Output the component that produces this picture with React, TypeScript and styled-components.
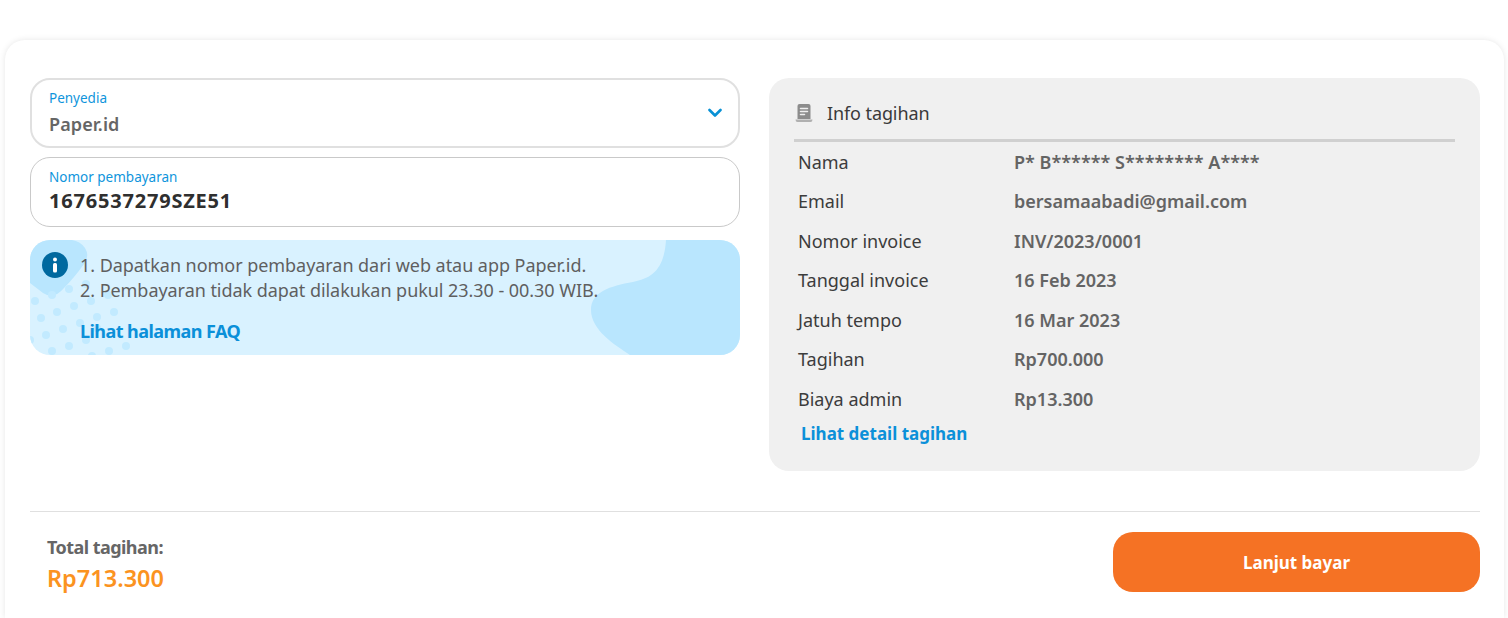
import React from 'react';
import styled, { createGlobalStyle } from 'styled-components';

const GlobalStyle = createGlobalStyle`
  html, body {
    margin: 0;
    background: #fff;
    font-family: "Noto Sans", "Liberation Sans", sans-serif;
    overflow: hidden;
  }
`;

const billRows = [
  ['Nama', 'P* B****** S******** A****'],
  ['Email', 'bersamaabadi@gmail.com'],
  ['Nomor invoice', 'INV/2023/0001'],
  ['Tanggal invoice', '16 Feb 2023'],
  ['Jatuh tempo', '16 Mar 2023'],
  ['Tagihan', 'Rp700.000'],
  ['Biaya admin', 'Rp13.300'],
];

const dots = [
  [5, 61], [22, 55], [39, 49], [56, 44], [78, 55], [61, 61], [44, 66], [27, 72], [11, 78], [67, 77], [84, 72],
  [33, 89], [50, 83], [16, 95], [67, 88], [56, 100], [39, 106], [22, 111], [96, 106], [79, 111], [0, 100], [62, 116],
];

const InfoBackground = () => (
  <BackgroundSvg viewBox="0 0 710 115" preserveAspectRatio="none">
    <path d="M0 0H42Q50 1 55 8Q60 16 54 24Q44 38 34 48Q24 60 13 53L0 43Z" fill="#b9e6fe" />
    <path d="M636 0H710V115H600C585 105 561 90 561 70C561 52 580 46 603 42C622 38 634 30 636 0Z" fill="#b9e6fe" />
    {dots.map(([cx, cy]) => (
      <circle key={`${cx}-${cy}`} cx={cx} cy={cy} r="4" fill="#c2eaff" />
    ))}
  </BackgroundSvg>
);

const InfoIcon = () => (
  <svg width="26" height="26" viewBox="0 0 26 26">
    <circle cx="13" cy="13" r="13" fill="#00699f" />
    <circle cx="13" cy="7.500" r="2" fill="#fff" />
    <rect x="11" y="11" width="4" height="9.500" rx="1.500" fill="#fff" />
  </svg>
);

const BillIcon = () => (
  <svg width="18" height="20" viewBox="0 0 18 20">
    <path d="M2.500 3Q2.500 1 4.500 1H13.500Q15.500 1 15.500 3V16H2.500Z" fill="#8c8c8c" />
    <path d="M.5 16.500H17.500Q17.500 19 15.500 19H2.500Q.5 19 .5 16.500Z" fill="#b0b0b0" />
    <path d="M5.500 5.500H12.500M5.500 8.500H12.500M5.500 11.500H9.500" stroke="#efefef" strokeWidth="1.500" strokeLinecap="round" />
  </svg>
);

const ChevronIcon = () => (
  <svg width="14" height="10" viewBox="0 0 14 10">
    <path d="M1.500 2L7 7.500L12.500 2" fill="none" stroke="#0891d5" strokeWidth="2.600" strokeLinecap="round" strokeLinejoin="round" />
  </svg>
);

export default function App() {
  return (
    <Page>
      <GlobalStyle />
      <Card>
        <Columns>
          <LeftColumn>
            <SelectField>
              <FieldText>
                <FieldLabel>Penyedia</FieldLabel>
                <SelectValue>Paper.id</SelectValue>
              </FieldText>
              <ChevronIcon />
            </SelectField>
            <InputField>
              <FieldLabel>Nomor pembayaran</FieldLabel>
              <InputValue>1676537279SZE51</InputValue>
            </InputField>
            <InfoBox>
              <InfoBackground />
              <IconSlot>
                <InfoIcon />
              </IconSlot>
              <InfoContent>
                <InfoLine>1. Dapatkan nomor pembayaran dari web atau app Paper.id.</InfoLine>
                <InfoLine>2. Pembayaran tidak dapat dilakukan pukul 23.30 - 00.30 WIB.</InfoLine>
                <FaqLink>Lihat halaman FAQ</FaqLink>
              </InfoContent>
            </InfoBox>
          </LeftColumn>
          <BillPanel>
            <BillHeader>
              <BillIcon />
              <BillTitle>Info tagihan</BillTitle>
            </BillHeader>
            <BillList>
              {billRows.map(([label, value]) => (
                <BillRow key={label}>
                  <BillLabel>{label}</BillLabel>
                  <BillValue>{value}</BillValue>
                </BillRow>
              ))}
            </BillList>
            <DetailLink>Lihat detail tagihan</DetailLink>
          </BillPanel>
        </Columns>
        <Footer>
          <TotalBlock>
            <TotalLabel>Total tagihan:</TotalLabel>
            <TotalValue>Rp713.300</TotalValue>
          </TotalBlock>
          <PayButton>Lanjut bayar</PayButton>
        </Footer>
      </Card>
    </Page>
  );
}

const Page = styled.div`
  padding: 40px 4px 0 5px;
  height: 618px;
  box-sizing: border-box;
`;

const Card = styled.div`
  height: 578px;
  box-sizing: border-box;
  padding: 38px 24px 0 25px;
  background: #fff;
  border-radius: 20px 20px 0 0;
  box-shadow: 0 0 6px rgba(0, 0, 0, 0.1);
`;

const Columns = styled.div`
  display: grid;
  grid-template-columns: 710px 711px;
  column-gap: 29px;
  height: 433px;
`;

const LeftColumn = styled.div`
  display: flex;
  flex-direction: column;
`;

const SelectField = styled.div`
  height: 70px;
  box-sizing: border-box;
  border: 2px solid #e0e0e0;
  border-radius: 20px;
  padding: 0 16px 0 17px;
  display: flex;
  align-items: center;
  justify-content: space-between;
`;

const FieldText = styled.div`
  display: flex;
  flex-direction: column;
`;

const FieldLabel = styled.div`
  font-size: 13.500px;
  line-height: 17px;
  color: #0f95dc;
`;

const SelectValue = styled.div`
  font-size: 18px;
  line-height: 26px;
  margin-top: 4px;
  font-weight: 600;
  letter-spacing: 0.1px;
  color: #666;
`;

const InputField = styled.div`
  margin-top: 9px;
  height: 70px;
  box-sizing: border-box;
  border: 1px solid #c9c9c9;
  border-radius: 20px;
  padding: 11px 18px 0 18px;
`;

const InputValue = styled.div`
  font-size: 20px;
  line-height: 30px;
  font-weight: 700;
  color: #2f2f2f;
  letter-spacing: 0.8px;
`;

const InfoBox = styled.div`
  position: relative;
  overflow: hidden;
  margin-top: 13px;
  height: 115px;
  background: #d9f2ff;
  border-radius: 20px;
  display: flex;
  padding: 13px 0 0 12px;
  box-sizing: border-box;
`;

const BackgroundSvg = styled.svg`
  position: absolute;
  inset: 0;
  width: 100%;
  height: 100%;
`;

const IconSlot = styled.div`
  position: relative;
  width: 38px;
  flex: none;
  margin-top: -1px;
`;

const InfoContent = styled.div`
  position: relative;
  display: flex;
  flex-direction: column;
`;

const InfoLine = styled.div`
  font-size: 18px;
  line-height: 25px;
  letter-spacing: -0.05px;
  color: #5f5f5f;
`;

const FaqLink = styled.a`
  margin-top: 16px;
  font-size: 18px;
  line-height: 24px;
  font-weight: 700;
  letter-spacing: -0.55px;
  color: #0b90d9;
`;

const BillPanel = styled.div`
  background: #f0f0f0;
  border-radius: 20px;
  padding: 15px 25px 0;
  height: 393px;
  box-sizing: border-box;
  display: flex;
  flex-direction: column;
`;

const BillHeader = styled.div`
  height: 39px;
  flex: none;
  border-bottom: 3px solid #d0d0d0;
  display: flex;
  align-items: center;
  gap: 14px;
  padding-left: 1px;
  padding-bottom: 7px;
`;

const BillTitle = styled.div`
  font-size: 18px;
  letter-spacing: -0.1px;
  color: #3a3a3a;
`;

const BillList = styled.div`
  display: flex;
  flex-direction: column;
`;

const BillRow = styled.div`
  display: grid;
  grid-template-columns: 216px 1fr;
  height: 39.500px;
  align-items: center;
  padding-left: 4px;
`;

const BillLabel = styled.div`
  font-size: 18px;
  color: #3c3c3c;
`;

const BillValue = styled.div`
  font-size: 18px;
  font-weight: 600;
  color: #646464;
`;

const DetailLink = styled.a`
  padding-left: 7px;
  margin-top: 3px;
  font-size: 17px;
  line-height: 24px;
  font-weight: 700;
  color: #0b90d9;
`;

const Footer = styled.div`
  border-top: 1px solid #e0e0e0;
  padding: 20px 0 0 17px;
  display: flex;
  justify-content: space-between;
  align-items: flex-start;
`;

const TotalBlock = styled.div`
  display: flex;
  flex-direction: column;
  padding-top: 3px;
`;

const TotalLabel = styled.div`
  font-size: 18px;
  line-height: 24px;
  font-weight: 700;
  letter-spacing: -0.55px;
  color: #666;
`;

const TotalValue = styled.div`
  font-size: 23.500px;
  line-height: 30px;
  margin-top: 4px;
  font-weight: 600;
  color: #fb931f;
`;

const PayButton = styled.button`
  width: 367px;
  height: 60px;
  border: none;
  border-radius: 20px;
  background: #f57224;
  color: #fff;
  font-family: inherit;
  font-size: 17px;
  font-weight: 700;
`;
